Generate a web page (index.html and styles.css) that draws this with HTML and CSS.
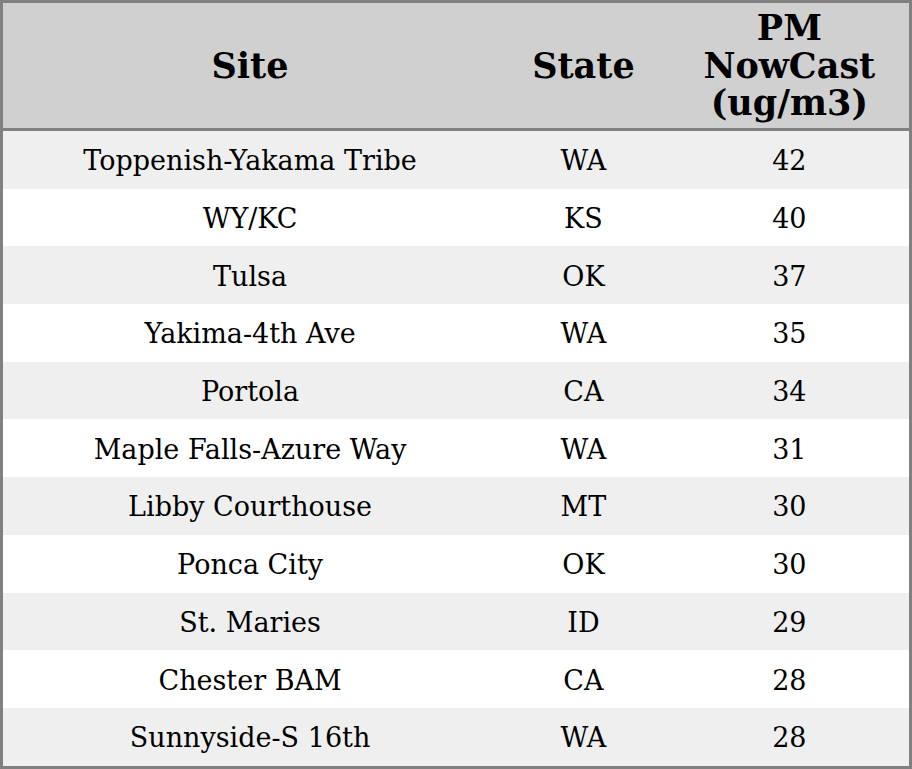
FILE: index.html
```html
<!DOCTYPE html>
<html>
<head>
<meta charset="utf-8">
<link rel="stylesheet" href="styles.css">
</head>
<body>
<table class="aq">
  <colgroup>
    <col class="c-site">
    <col class="c-state">
    <col class="c-pm">
  </colgroup>
  <thead>
    <tr><th>Site</th><th>State</th><th>PM<br>NowCast<br>(ug/m3)</th></tr>
  </thead>
  <tbody>
    <tr><td>Toppenish-Yakama Tribe</td><td>WA</td><td>42</td></tr>
    <tr><td>WY/KC</td><td>KS</td><td>40</td></tr>
    <tr><td>Tulsa</td><td>OK</td><td>37</td></tr>
    <tr><td>Yakima-4th Ave</td><td>WA</td><td>35</td></tr>
    <tr><td>Portola</td><td>CA</td><td>34</td></tr>
    <tr><td>Maple Falls-Azure Way</td><td>WA</td><td>31</td></tr>
    <tr><td>Libby Courthouse</td><td>MT</td><td>30</td></tr>
    <tr><td>Ponca City</td><td>OK</td><td>30</td></tr>
    <tr><td>St. Maries</td><td>ID</td><td>29</td></tr>
    <tr><td>Chester BAM</td><td>CA</td><td>28</td></tr>
    <tr><td>Sunnyside-S 16th</td><td>WA</td><td>28</td></tr>
  </tbody>
</table>
</body>
</html>
```
FILE: styles.css
```css
html, body {
  margin: 0;
  padding: 0;
  background: #ffffff;
}
.aq {
  width: 912px;
  border-collapse: collapse;
  border: 3px solid #808080;
  font-family: "DejaVu Serif", serif;
  color: #000;
}
.c-site { width: 494px; }
.c-state { width: 172px; }
.c-pm { width: 240px; }
.aq th {
  background: #d0d0d0;
  font-size: 35px;
  font-weight: bold;
  line-height: 37.5px;
  height: 125px;
  padding: 0;
  text-align: center;
  vertical-align: middle;
  border-bottom: 3px solid #808080;
}
.aq td {
  font-size: 27px;
  height: 55.7px;
  padding: 2px 0 0 0;
  text-align: center;
  vertical-align: middle;
}
.aq tbody tr:nth-child(odd) td {
  background: #efefef;
}
```
